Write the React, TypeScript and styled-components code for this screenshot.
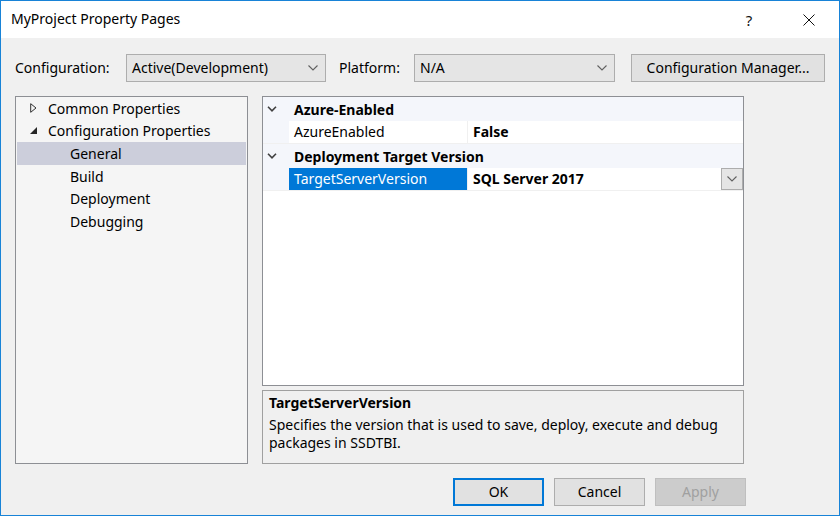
import React from "react";
import styled, { createGlobalStyle, css } from "styled-components";

const Global = createGlobalStyle`
  html, body { margin: 0; padding: 0; background: #ffffff; }
  body { font-family: "Noto Sans", "Open Sans", "DejaVu Sans", sans-serif; }
  * { box-sizing: border-box; }
`;

const Window = styled.div`
  width: 840px;
  height: 516px;
  border: 1px solid #1883d7;
  display: flex;
  flex-direction: column;
  background: #f0f0f0;
  color: #000;
  font-size: 14px;
  overflow: hidden;
`;

const TitleBar = styled.div`
  height: 37px;
  background: #ffffff;
  display: flex;
  align-items: center;
  padding-left: 10px;
  flex-shrink: 0;
`;

const Title = styled.div`
  flex: 1;
  font-size: 14px;
  padding-bottom: 2px;
`;

const TitleButton = styled.div<{ $w: number }>`
  width: ${(p) => p.$w}px;
  height: 37px;
  display: flex;
  align-items: center;
  justify-content: center;
  font-size: 15px;
  color: #111;
`;

const Body = styled.div`
  flex: 1;
  display: flex;
  flex-direction: column;
  padding: 16px 0 0 14px;
`;

const Toolbar = styled.div`
  display: flex;
  align-items: center;
  height: 28px;
`;

const Label = styled.div<{ $w: number; $pad?: number }>`
  width: ${(p) => p.$w}px;
  padding-left: ${(p) => p.$pad ?? 0}px;
  font-size: 14px;
  padding-bottom: 1px;
`;

const Spacer = styled.div<{ $w: number }>`
  width: ${(p) => p.$w}px;
  flex-shrink: 0;
`;

const Combo = styled.div<{ $w: number }>`
  width: ${(p) => p.$w}px;
  height: 28px;
  background: #e5e5e5;
  border: 1px solid #adadad;
  display: flex;
  align-items: center;
  padding: 0 7px 1px 5px;
  font-size: 14px;
`;

const ComboText = styled.div`
  flex: 1;
`;

const Button = styled.div<{ $w: number; $variant?: "default" | "disabled" }>`
  width: ${(p) => p.$w}px;
  height: 28px;
  background: #e1e1e1;
  border: 1px solid #adadad;
  display: flex;
  align-items: center;
  justify-content: center;
  font-size: 14px;
  padding-bottom: 1px;
  ${(p) =>
    p.$variant === "default" &&
    css`
      border: 2px solid #0078d7;
    `}
  ${(p) =>
    p.$variant === "disabled" &&
    css`
      background: #cccccc;
      border-color: #bfbfbf;
      color: #a0a0a0;
    `}
`;

const Main = styled.div`
  display: flex;
  margin-top: 14px;
  gap: 14px;
`;

const Tree = styled.div`
  width: 233px;
  height: 368px;
  border: 1px solid #8d8f94;
  background: #f5f5f5;
  padding: 0 1px 1px 1px;
`;

const TreeRow = styled.div<{ $level: number; $selected?: boolean }>`
  height: 22.6px;
  display: flex;
  align-items: center;
  padding-left: ${(p) => (p.$level === 0 ? 11 : 53)}px;
  background: ${(p) => (p.$selected ? "#cccedb" : "transparent")};
  font-size: 14px;
  white-space: nowrap;
`;

const Expander = styled.span`
  width: 20px;
  height: 14px;
  display: inline-flex;
  align-items: center;
  justify-content: flex-start;
  padding-left: 2px;
`;

const RightCol = styled.div`
  width: 482px;
  display: flex;
  flex-direction: column;
  gap: 4px;
`;

const Grid = styled.div`
  height: 290px;
  border: 1px solid #8d8f94;
  background: #ffffff;
  display: flex;
  flex-direction: column;
`;

const CategoryRow = styled.div`
  height: 24px;
  display: flex;
  align-items: center;
  background: #f4f6fb;
  font-weight: 700;
  font-size: 14px;
`;

const Chevron = styled.span`
  width: 31px;
  display: inline-flex;
  align-items: center;
  justify-content: flex-start;
  padding-left: 4px;
`;

const PropRow = styled.div`
  height: 23px;
  display: flex;
  border-bottom: 1px solid #f0f0f0;
`;

const Gutter = styled.div`
  width: 26px;
  background: #f4f6fb;
`;

const NameCell = styled.div<{ $selected?: boolean }>`
  width: 179px;
  display: flex;
  align-items: center;
  padding: 0 0 1px 5px;
  font-size: 14px;
  background: ${(p) => (p.$selected ? "#0078d7" : "#ffffff")};
  color: ${(p) => (p.$selected ? "#ffffff" : "#000000")};
  border-right: 1px solid #f0f0f0;
`;

const ValueCell = styled.div`
  flex: 1;
  display: flex;
  align-items: center;
  padding: 0 0 1px 5px;
  font-weight: 700;
  font-size: 14px;
`;

const ValueText = styled.div`
  flex: 1;
`;

const DropButton = styled.div`
  width: 22px;
  height: 22px;
  background: #e5e5e5;
  border: 1px solid #adadad;
  display: flex;
  align-items: center;
  justify-content: center;
  margin-top: 1px;
`;

const Desc = styled.div`
  height: 74px;
  border: 1px solid #a0a0a0;
  background: #f0f0f0;
  padding: 3px 6px 0 6px;
  font-size: 14px;
  line-height: 18px;
`;

const DescTitle = styled.div`
  font-weight: 700;
  margin-bottom: 4px;
`;

const Footer = styled.div`
  display: flex;
  gap: 10px;
  margin-top: 14px;
  padding-left: 438px;
`;

const ComboChevron = () => (
  <svg width="10" height="6" viewBox="0 0 10 6">
    <path d="M0.5 0.5 L5 5 L9.5 0.5" fill="none" stroke="#606060" strokeWidth="1.1" />
  </svg>
);

const CatChevron = () => (
  <svg width="10" height="6" viewBox="0 0 10 6">
    <path d="M1 0.8 L5 4.8 L9 0.8" fill="none" stroke="#404040" strokeWidth="1.6" />
  </svg>
);

const Collapsed = () => (
  <svg width="7" height="10" viewBox="0 0 7 10">
    <path d="M0.7 0.7 L6 5 L0.7 9.3 Z" fill="none" stroke="#303030" strokeWidth="1" />
  </svg>
);

const Expanded = () => (
  <svg width="7" height="7" viewBox="0 0 7 7">
    <path d="M7 0 L7 7 L0 7 Z" fill="#262626" />
  </svg>
);

const CloseIcon = () => (
  <svg width="12" height="12" viewBox="0 0 12 12">
    <path d="M0.5 0.5 L11.5 11.5 M11.5 0.5 L0.5 11.5" stroke="#111" strokeWidth="1" />
  </svg>
);

export default function App() {
  return (
    <>
      <Global />
      <Window>
        <TitleBar>
          <Title>MyProject Property Pages</Title>
          <TitleButton $w={60}>?</TitleButton>
          <TitleButton $w={60}>
            <CloseIcon />
          </TitleButton>
        </TitleBar>
        <Body>
          <Toolbar>
            <Label $w={111}>Configuration:</Label>
            <Combo $w={200}>
              <ComboText>Active(Development)</ComboText>
              <ComboChevron />
            </Combo>
            <Label $w={88} $pad={13}>Platform:</Label>
            <Combo $w={201}>
              <ComboText>N/A</ComboText>
              <ComboChevron />
            </Combo>
            <Spacer $w={16} />
            <Button $w={194}>Configuration Manager...</Button>
          </Toolbar>
          <Main>
            <Tree>
              <TreeRow $level={0}>
                <Expander>
                  <Collapsed />
                </Expander>
                Common Properties
              </TreeRow>
              <TreeRow $level={0}>
                <Expander>
                  <Expanded />
                </Expander>
                Configuration Properties
              </TreeRow>
              <TreeRow $level={1} $selected>
                General
              </TreeRow>
              <TreeRow $level={1}>Build</TreeRow>
              <TreeRow $level={1}>Deployment</TreeRow>
              <TreeRow $level={1}>Debugging</TreeRow>
            </Tree>
            <RightCol>
              <Grid>
                <CategoryRow>
                  <Chevron>
                    <CatChevron />
                  </Chevron>
                  Azure-Enabled
                </CategoryRow>
                <PropRow>
                  <Gutter />
                  <NameCell>AzureEnabled</NameCell>
                  <ValueCell>
                    <ValueText>False</ValueText>
                  </ValueCell>
                </PropRow>
                <CategoryRow>
                  <Chevron>
                    <CatChevron />
                  </Chevron>
                  Deployment Target Version
                </CategoryRow>
                <PropRow>
                  <Gutter />
                  <NameCell $selected>TargetServerVersion</NameCell>
                  <ValueCell>
                    <ValueText>SQL Server 2017</ValueText>
                    <DropButton>
                      <ComboChevron />
                    </DropButton>
                  </ValueCell>
                </PropRow>
              </Grid>
              <Desc>
                <DescTitle>TargetServerVersion</DescTitle>
                Specifies the version that is used to save, deploy, execute and debug packages in SSDTBI.
              </Desc>
            </RightCol>
          </Main>
          <Footer>
            <Button $w={91} $variant="default">OK</Button>
            <Button $w={91}>Cancel</Button>
            <Button $w={91} $variant="disabled">Apply</Button>
          </Footer>
        </Body>
      </Window>
    </>
  );
}
